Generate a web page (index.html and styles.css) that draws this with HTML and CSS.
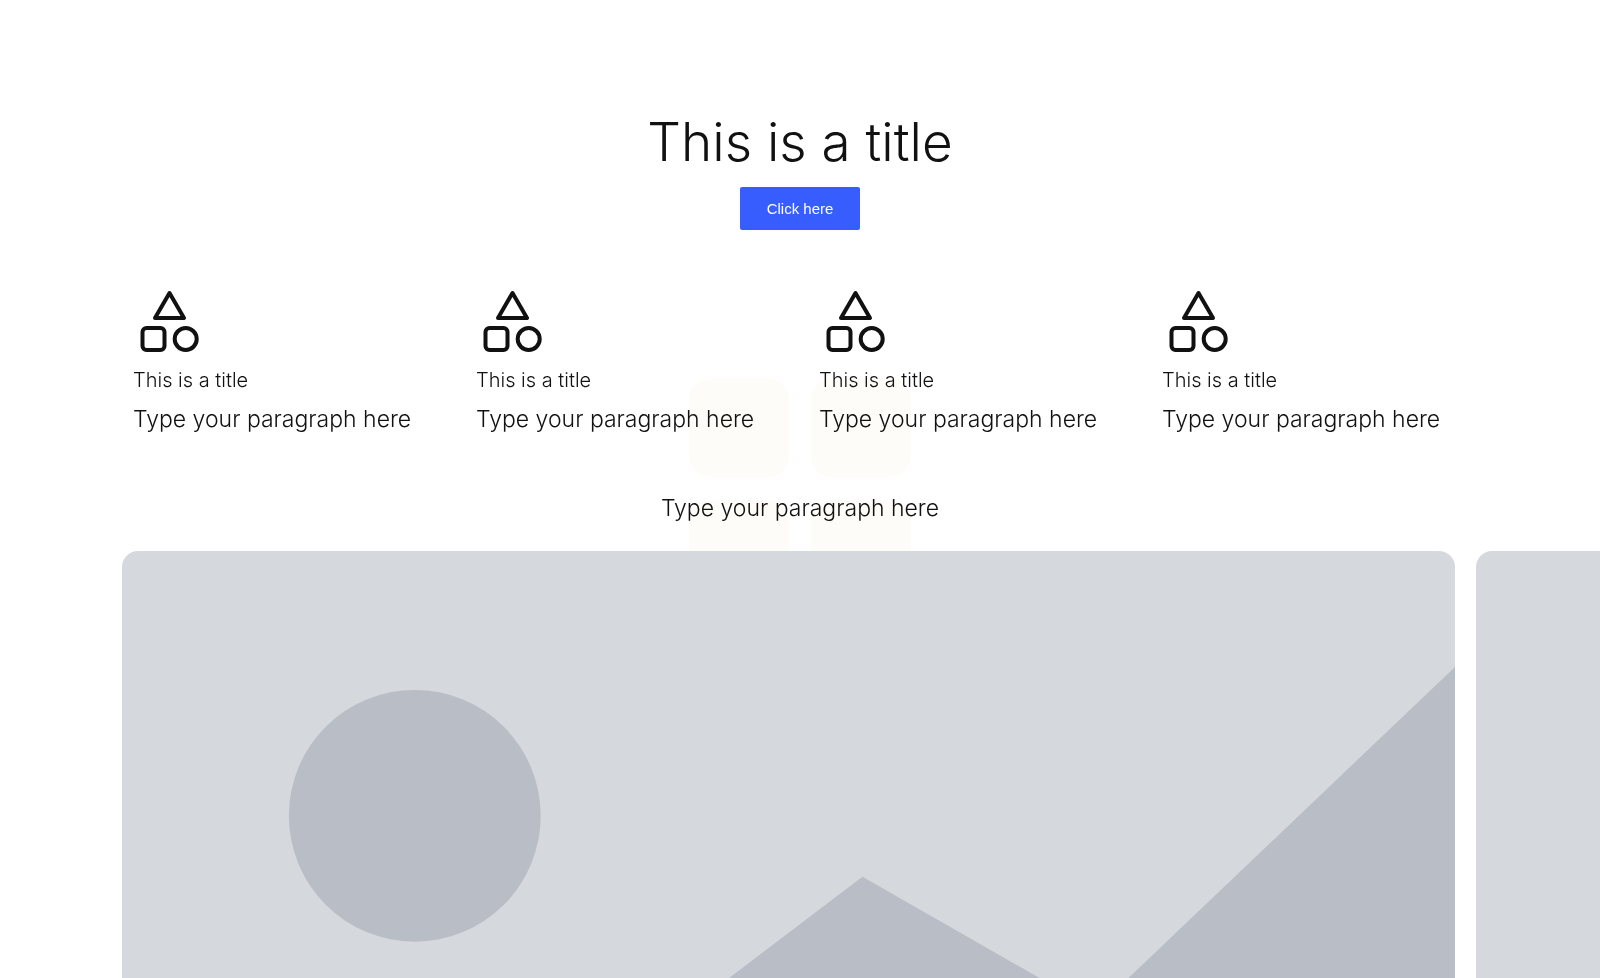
FILE: index.html
```html
<!DOCTYPE html>
<html lang="en">
<head>
    <meta charset="UTF-8">
    <meta name="viewport" content="width=device-width, initial-scale=1.0">
    <title>This is a title</title>
    <link rel="stylesheet" href="styles.css">
</head>
<body>

    <svg class="watermark" viewBox="0 0 222 222" aria-hidden="true">
        <rect x="0" y="0" width="100" height="100" rx="22"/>
        <rect x="122" y="0" width="100" height="100" rx="22"/>
        <rect x="0" y="122" width="100" height="100" rx="22"/>
        <rect x="122" y="122" width="100" height="100" rx="22"/>
    </svg>

    <svg class="sprite" aria-hidden="true">
        <symbol id="shapes" viewBox="0 0 72 72">
            <path d="M36.500 7L51 32H22Z"/>
            <rect x="9.500" y="42" width="22" height="22" rx="4"/>
            <circle cx="52.700" cy="53" r="11"/>
        </symbol>
    </svg>

    <main>
        <header class="hero">
            <h1>This is a title</h1>
            <button class="btn" type="button">Click here</button>
        </header>

        <section class="features">
            <article class="feature">
                <svg class="icon"><use href="#shapes"/></svg>
                <h2>This is a title</h2>
                <p>Type your paragraph here</p>
            </article>
            <article class="feature">
                <svg class="icon"><use href="#shapes"/></svg>
                <h2>This is a title</h2>
                <p>Type your paragraph here</p>
            </article>
            <article class="feature">
                <svg class="icon"><use href="#shapes"/></svg>
                <h2>This is a title</h2>
                <p>Type your paragraph here</p>
            </article>
            <article class="feature">
                <svg class="icon"><use href="#shapes"/></svg>
                <h2>This is a title</h2>
                <p>Type your paragraph here</p>
            </article>
        </section>

        <p class="intro">Type your paragraph here</p>

        <section class="slider">
            <div class="slide">
                <svg viewBox="0 0 1334 800">
                    <circle cx="293" cy="265" r="126"/>
                    <path d="M608 427L741 326L1000 474V800H122Z"/>
                    <path d="M1334 116V800H616Z"/>
                </svg>
            </div>
            <div class="slide"></div>
        </section>
    </main>

</body>
</html>
```
FILE: styles.css
```css
body {
    margin: 0;
    font-family: Inter, "Open Sans", sans-serif;
    font-weight: 300;
    color: #111;
    background-color: #fff;
}
main {
    position: relative;
    display: flex;
    flex-direction: column;
    box-sizing: border-box;
    height: 100vh;
    min-height: 700px;
    padding: 104px 0 0 122px;
}
h1, h2, p {
    margin: 0;
    font-weight: 300;
}
.sprite {
    display: none;
}
.watermark {
    position: fixed;
    top: 50%;
    left: 50%;
    width: 222px;
    height: 222px;
    transform: translate(-50%, -50%);
    fill: #fdfcf8;
}
.hero {
    display: flex;
    flex-direction: column;
    align-items: center;
    gap: 7px;
    margin-right: 122px;
}
.hero h1 {
    font-size: 53px;
    line-height: 76px;
}
.btn {
    width: 120px;
    height: 43px;
    border: none;
    border-radius: 2px;
    background-color: #385dff;
    color: white;
    font: 15px "Liberation Sans", Arial, sans-serif;
    cursor: pointer;
}
.btn:hover {
    background-color: #2448e0;
}
.features {
    display: grid;
    grid-template-columns: repeat(4, 1fr);
    gap: 16px;
    margin: 56px 122px 0 0;
}
.feature {
    padding: 0 11px;
}
.icon {
    display: block;
    width: 72px;
    height: 72px;
    fill: none;
    stroke: #111;
    stroke-width: 4px;
    stroke-linejoin: round;
}
.feature h2 {
    margin-top: 6px;
    font-size: 20px;
    line-height: 32px;
}
.feature p, .intro {
    font-size: 23px;
    line-height: 38px;
    white-space: nowrap;
}
.feature p {
    margin-top: 4px;
}
.intro {
    margin: 51px 122px 0 0;
    text-align: center;
}
.slider {
    display: flex;
    flex: 1;
    gap: 21px;
    min-height: 0;
    margin-top: 24px;
    overflow: hidden;
}
.slide {
    flex: 0 0 calc(100% - 145px);
    border-radius: 16px 16px 0 0;
    background-color: #d5d8dd;
    overflow: hidden;
}
.slide svg {
    display: block;
    width: 100%;
    fill: #b9bdc5;
}
```
